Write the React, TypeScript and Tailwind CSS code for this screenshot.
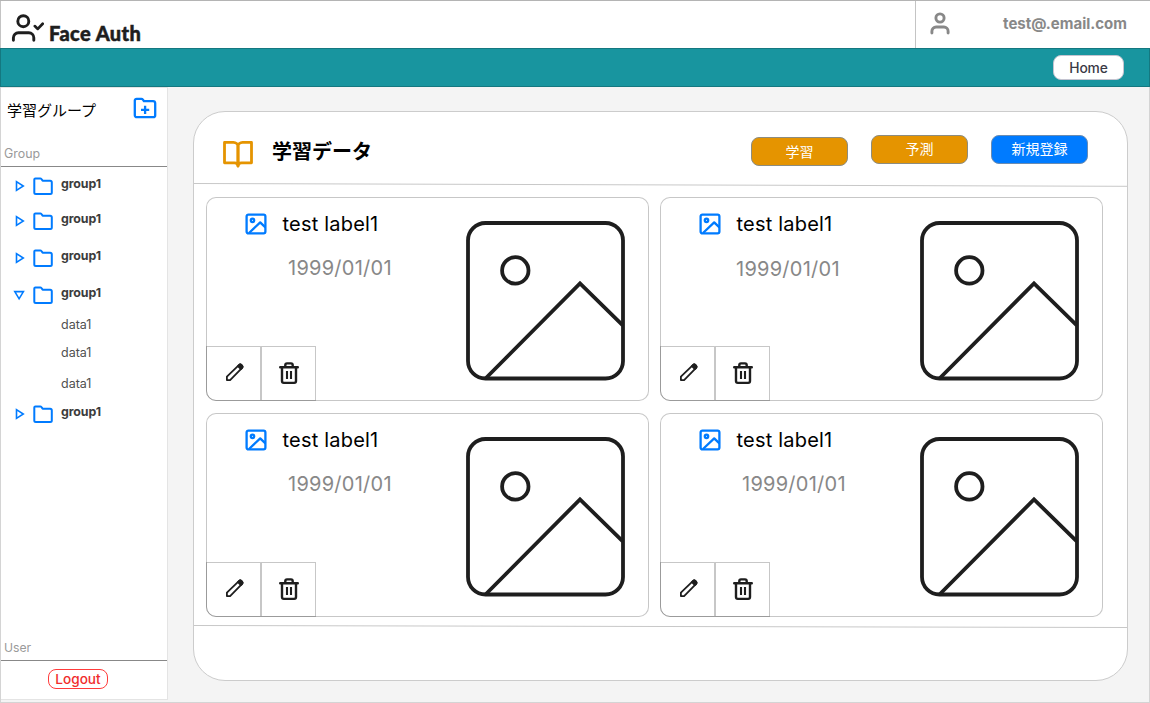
import React from "react";

const inter = "font-['Inter','Noto_Sans_CJK_JP',sans-serif]";
const jp = "font-['Noto_Sans_CJK_JP',sans-serif]";

function UserCheckIcon() {
  return (
    <svg className="mt-[13px] ml-[10px] h-[30px] w-[33px] shrink-0" viewBox="0 0 33 30" fill="none" stroke="#1e1e1e" strokeWidth="2.9" strokeLinecap="round" strokeLinejoin="round">
      <circle cx="12.3" cy="7.2" r="5.5" />
      <path d="M2.4 26.2v-2.4a5 5 0 0 1 5-5h10.4a5 5 0 0 1 5 5v2.4" />
      <path d="M23.8 12.1l3 2.8 4.9-5.2" strokeWidth="2.7" />
    </svg>
  );
}

function UserIcon() {
  return (
    <svg className="mt-[11px] ml-[14px] h-[24px] w-[20px] shrink-0" viewBox="0 0 20 24" fill="none" stroke="#888888" strokeWidth="2.9" strokeLinecap="round" strokeLinejoin="round">
      <circle cx="10" cy="6" r="4.1" />
      <path d="M1.9 21.1v-1.9a4.2 4.2 0 0 1 4.2-4.2h7.8a4.2 4.2 0 0 1 4.2 4.2v1.9" />
    </svg>
  );
}

function FolderPlusIcon() {
  return (
    <svg className="h-[22px] w-[24px]" viewBox="0 0 24 22" fill="none" stroke="#007bff" strokeWidth="2.3" strokeLinejoin="round">
      <path d="M3.6 1.8h4.7a2 2 0 0 1 1.6.8l1 1.5H20a2.2 2.2 0 0 1 2.2 2.2v11.9a2 2 0 0 1-2 2H3.8a2 2 0 0 1-2-2V3.6a1.8 1.8 0 0 1 1.8-1.8Z" />
      <path d="M8 12.8h8.2M12.1 8.7v8.2" />
    </svg>
  );
}

function FolderIcon() {
  return (
    <svg className="ml-[8px] h-[20px] w-[20px] shrink-0" viewBox="0 0 20 20" fill="none" stroke="#007bff" strokeWidth="2" strokeLinejoin="round">
      <path d="M2.4 2.4h4.9c.5 0 .8.2 1.1.6l1.2 1.7h7.5c1 0 1.7.7 1.7 1.7v10.1c0 .8-.7 1.5-1.5 1.5H2.8c-.8 0-1.5-.7-1.5-1.5V3.5c0-.6.5-1.1 1.1-1.1Z" />
    </svg>
  );
}

function Caret({ open }: { open?: boolean }) {
  return (
    <svg className="ml-[12px] h-[20px] w-[12px] shrink-0" viewBox="0 0 12 20" fill="none" stroke="#007bff" strokeWidth="1.6">
      {open ? <path d="M1.8 6.6h8.6L6.1 13.8Z" /> : <path d="M3.5 5.6v8.8l6.8-4.4Z" />}
    </svg>
  );
}

function BookIcon() {
  return (
    <svg className="mt-[28px] ml-[28px] h-[30px] w-[32px] shrink-0" viewBox="0 0 32 30" fill="none" stroke="#e59400" strokeWidth="2.8" strokeLinecap="round" strokeLinejoin="round">
      <path d="M16 26V6.6c0-2.4-2.1-4.2-4.6-4.2H2.5v20.4h10c2 0 3.5 1.3 3.5 3.2Z" />
      <path d="M16 26V6.6c0-2.4 2.1-4.2 4.6-4.2h8.9v20.4h-10c-2 0-3.5 1.3-3.5 3.2Z" />
    </svg>
  );
}

function LabelIcon() {
  return (
    <svg className="h-[22px] w-[22px] shrink-0" viewBox="0 0 22 22" fill="none" stroke="#007bff" strokeWidth="2.3" strokeLinejoin="round">
      <rect x="1.6" y="1.6" width="18.8" height="18.8" rx="1.8" />
      <circle cx="7.5" cy="7.3" r="1.7" />
      <path d="M4 20L15.2 9.4l5.2 5" />
    </svg>
  );
}

function PictureIcon() {
  return (
    <svg className="mt-[23px] mr-[22px] h-[160px] w-[160px] shrink-0" viewBox="0 0 160 160" fill="none" stroke="#1e1e1e" strokeWidth="3.8">
      <rect x="2" y="2" width="155" height="155.5" rx="17.5" />
      <circle cx="49.3" cy="49.4" r="13.2" />
      <path d="M19.5 157.5L114 62.4l42.8 42" />
    </svg>
  );
}

function PencilIcon() {
  return (
    <svg className="h-[20px] w-[20px]" viewBox="0 0 20 20" fill="none" stroke="#1e1e1e" strokeWidth="1.8" strokeLinejoin="round">
      <path d="M1.9 18.1v-3.4L14.1 2.9a1.5 1.5 0 0 1 2.1 0l.9.9a1.5 1.5 0 0 1 0 2.1L5.1 18.1Z" />
      <path d="M12.9 4.1l1.3-1.3a1.5 1.5 0 0 1 2.1 0l.9.9a1.5 1.5 0 0 1 0 2.1l-1.3 1.3Z" fill="#1e1e1e" />
    </svg>
  );
}

function TrashIcon() {
  return (
    <svg className="h-[24px] w-[22px]" viewBox="0 0 22 24" fill="none" stroke="#1e1e1e" strokeWidth="2.4" strokeLinecap="round" strokeLinejoin="round">
      <path d="M2.2 6.2h17.6M4 6.2v13.9c0 1.1.7 1.8 1.8 1.8h10.4c1.1 0 1.8-.7 1.8-1.8V6.2M7.3 6.2V4.1c0-1.1.8-1.7 1.7-1.7h4c.9 0 1.7.6 1.7 1.7v2.1" />
      <path d="M9 10v8M13 10v8" strokeLinecap="butt" strokeWidth="2.1" />
    </svg>
  );
}

function GroupRow({ height, open }: { height: string; open?: boolean }) {
  return (
    <div className={`flex pt-[9px] ${height}`}>
      <Caret open={open} />
      <FolderIcon />
      <span className="ml-[8px] text-[12.4px] leading-[16px] font-bold tracking-[-0.1px] text-[#3c3c3c]">group1</span>
    </div>
  );
}

function DataRow({ height }: { height: string }) {
  return <div className={`pl-[60px] text-[12.5px] leading-[23px] text-[#505050] ${height}`}>data1</div>;
}

function DataCard({ datePosition }: { datePosition: string }) {
  return (
    <article className="flex h-[204px] w-[443px] justify-between rounded-[10px] border border-black/22 bg-white">
      <div className="flex flex-col justify-between">
        <div className="pt-[14px]">
          <div className="flex items-center pl-[38px]">
            <LabelIcon />
            <span className="ml-[15.5px] text-[20px] leading-[24px] tracking-[0.2px] text-black">test label1</span>
          </div>
          <div className={`text-[20px] leading-[24px] font-normal tracking-[0.25px] text-[#888888] ${datePosition}`}>1999/01/01</div>
        </div>
        <div className="-mb-px -ml-px flex">
          <button className="flex h-[55px] w-[55px] items-center justify-center rounded-bl-[10px] border border-black/22 pb-[3px] pl-[3px]">
            <PencilIcon />
          </button>
          <button className="flex h-[55px] w-[55px] items-center justify-center border border-black/22 pb-[2px]">
            <TrashIcon />
          </button>
        </div>
      </div>
      <PictureIcon />
    </article>
  );
}

export default function App() {
  return (
    <div className={`flex h-[703px] w-[1150px] flex-col overflow-hidden border-t border-[#b4b4b4] bg-[#f4f4f4] ${inter}`}>
      <header className="flex h-[47px] border-l border-[#c4c4c4] bg-white">
        <UserCheckIcon />
        <h1 className="mt-[18px] ml-[5px] grow text-[20px] leading-[28px] font-black tracking-[0.42px] text-[#1e1e1e] [-webkit-text-stroke:0.5px_#1e1e1e] font-['Lato',sans-serif]">Face Auth</h1>
        <div className="flex w-[235px] border-l border-[#c4c4c4]">
          <UserIcon />
          <span className="mt-[13px] mr-[23px] ml-auto text-[15px] leading-[20px] font-bold text-[#888888]">test@.email.com</span>
        </div>
      </header>
      <nav className="flex h-[39px] justify-end border border-[#147880] bg-[#18959f] pt-[6px] pr-[25px]">
        <button className="h-[25px] w-[71px] rounded-[8px] border border-[#c4c4d0] bg-white pt-px text-[13.8px] leading-[22px] font-medium tracking-[-0.1px] text-[#3a3a46]">Home</button>
      </nav>
      <div className="flex h-[616px] border-r border-b border-l border-[#d4d4d4]">
        <aside className="flex h-[613px] w-[167px] shrink-0 flex-col border-t border-r border-b border-[#e4e4e4] bg-white">
          <div className="flex h-[56px] justify-between pt-[9px] pr-[10px] pl-[6px]">
            <h2 className={`pt-[2px] text-[15px] leading-[22px] text-black ${jp}`}>学習グループ</h2>
            <FolderPlusIcon />
          </div>
          <div className="h-[23px] border-b border-[#888888] pl-[3px] text-[12.4px] leading-[20px] text-[#9a9a9a]">Group</div>
          <div className="grow">
            <GroupRow height="h-[35px]" />
            <GroupRow height="h-[37px]" />
            <GroupRow height="h-[37px]" />
            <GroupRow height="h-[37px]" open />
            <DataRow height="h-[28px]" />
            <DataRow height="h-[31px]" />
            <DataRow height="h-[23px]" />
            <GroupRow height="h-[35px]" />
          </div>
          <div className="h-[23px] border-b border-[#888888] pl-[3px] text-[12.2px] leading-[20px] text-[#9a9a9a]">User</div>
          <div className="h-[38px] pt-[8px] pl-[47px]">
            <button className="block h-[20px] w-[60px] rounded-[8px] border border-[#ff3b3b] text-[13.6px] leading-[18px] font-medium text-[#f02c2c]">Logout</button>
          </div>
        </aside>
        <main className="mt-[24px] ml-[25px] flex h-[570px] w-[935px] flex-col overflow-hidden rounded-[32px] border border-[#cccccc] bg-white">
          <div className="flex h-[71px]">
            <BookIcon />
            <h2 className={`mt-[24px] ml-[18px] grow text-[20px] leading-[30px] font-bold text-black ${jp}`}>学習データ</h2>
            <div className={`mr-[39px] flex gap-[23px] pt-[23px] text-[14px] text-white ${jp}`}>
              <button className="mt-[2px] h-[29px] w-[97px] rounded-[8px] border border-[#8c8c80] bg-[#e59400] pb-px leading-[26px]">学習</button>
              <button className="h-[29px] w-[97px] rounded-[8px] border border-[#8c8c80] bg-[#e59400] pb-[2px] leading-[25px]">予測</button>
              <button className="h-[29px] w-[97px] rounded-[8px] border border-[#6c8cb0] bg-[#007bff] pb-[2px] leading-[25px]">新規登録</button>
            </div>
          </div>
          <svg className="h-[4px] w-[933px] shrink-0" viewBox="0 0 933 4" stroke="#c8c8c8">
            <path d="M0 .5L933 3.3" />
          </svg>
          <div className="grid grid-cols-[443px_443px] gap-x-[11px] gap-y-[12px] pt-[10px] pl-[12px]">
            <DataCard datePosition="pt-[20px] pl-[81px]" />
            <DataCard datePosition="pt-[21px] pl-[75px]" />
            <DataCard datePosition="pt-[20px] pl-[81px]" />
            <DataCard datePosition="pt-[20px] pl-[81px]" />
          </div>
          <svg className="mt-[8px] h-[3px] w-[933px] shrink-0" viewBox="0 0 933 3" stroke="#c8c8c8">
            <path d="M0 .5L933 2.5" />
          </svg>
        </main>
      </div>
    </div>
  );
}
